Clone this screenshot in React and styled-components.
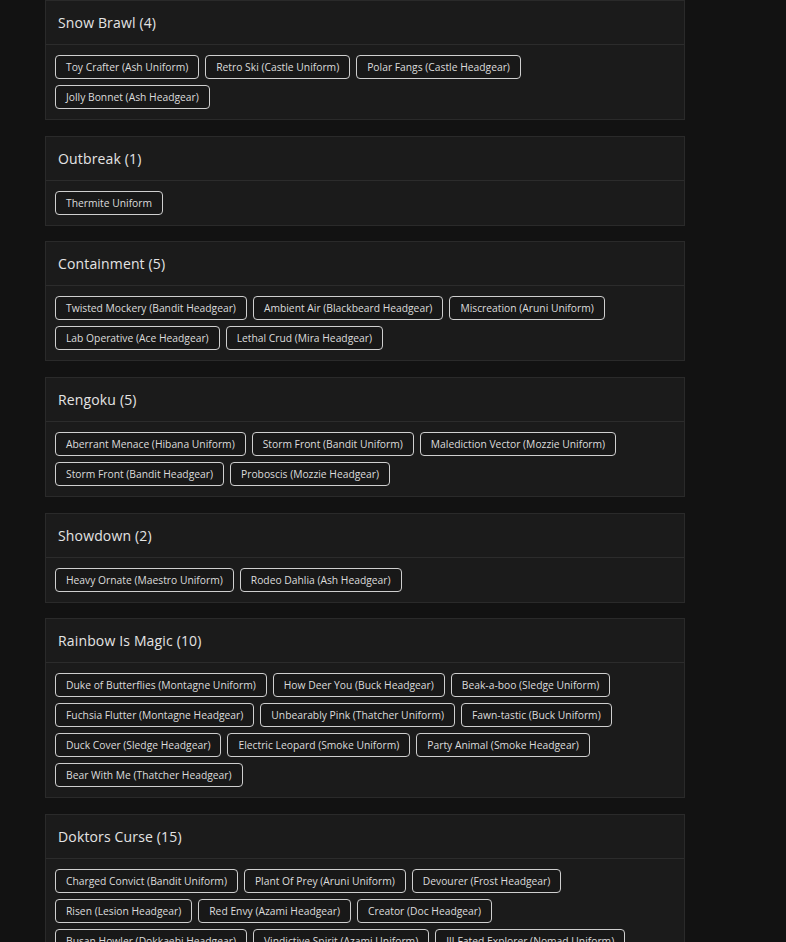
import React from "react";
import styled, { createGlobalStyle } from "styled-components";

const Global = createGlobalStyle`
  html, body { margin: 0; padding: 0; background: #121212; }
  body { font-family: "Open Sans", "Liberation Sans", sans-serif; color: #e0e0e0; }
  ::-webkit-scrollbar { width: 0; height: 0; }
`;

const Page = styled.div`
  padding: 0 0 40px 45px;
  display: flex;
  flex-direction: column;
  gap: 15.7px;
  width: 640px;
`;

const Card = styled.section`
  background: #1b1b1b;
  border: 1px solid #2a2a2a;
  display: flex;
  flex-direction: column;
`;

const Header = styled.div`
  height: 43px;
  padding: 0 12px;
  display: flex;
  align-items: center;
  border-bottom: 1px solid #2c2c2c;
`;

const Title = styled.h3`
  margin: 0;
  font-size: 14px;
  font-weight: 500;
  color: #e4e4e4;
  letter-spacing: 0.15px;
`;

const Body = styled.div`
  padding: 10px 9px;
  display: flex;
  flex-wrap: wrap;
  gap: 6px;
`;

const Chip = styled.span`
  display: inline-flex;
  align-items: center;
  height: 24px;
  box-sizing: border-box;
  padding: 0 10px;
  border: 1px solid #cfcfcf;
  border-radius: 4px;
  background: #181818;
  font-size: 10.3px;
  color: #dcdcdc;
  white-space: nowrap;
`;

const data = [
  ["Snow Brawl", ["Toy Crafter (Ash Uniform)", "Retro Ski (Castle Uniform)", "Polar Fangs (Castle Headgear)", "Jolly Bonnet (Ash Headgear)"]],
  ["Outbreak", ["Thermite Uniform"]],
  ["Containment", ["Twisted Mockery (Bandit Headgear)", "Ambient Air (Blackbeard Headgear)", "Miscreation (Aruni Uniform)", "Lab Operative (Ace Headgear)", "Lethal Crud (Mira Headgear)"]],
  ["Rengoku", ["Aberrant Menace (Hibana Uniform)", "Storm Front (Bandit Uniform)", "Malediction Vector (Mozzie Uniform)", "Storm Front (Bandit Headgear)", "Proboscis (Mozzie Headgear)"]],
  ["Showdown", ["Heavy Ornate (Maestro Uniform)", "Rodeo Dahlia (Ash Headgear)"]],
  ["Rainbow Is Magic", ["Duke of Butterflies (Montagne Uniform)", "How Deer You (Buck Headgear)", "Beak-a-boo (Sledge Uniform)", "Fuchsia Flutter (Montagne Headgear)", "Unbearably Pink (Thatcher Uniform)", "Fawn-tastic (Buck Uniform)", "Duck Cover (Sledge Headgear)", "Electric Leopard (Smoke Uniform)", "Party Animal (Smoke Headgear)", "Bear With Me (Thatcher Headgear)"]],
  ["Doktors Curse", ["Charged Convict (Bandit Uniform)", "Plant Of Prey (Aruni Uniform)", "Devourer (Frost Headgear)", "Risen (Lesion Headgear)", "Red Envy (Azami Headgear)", "Creator (Doc Headgear)", "Busan Howler (Dokkaebi Headgear)", "Vindictive Spirit (Azami Uniform)", "Ill-Fated Explorer (Nomad Uniform)", "Dark Horror (Kaid Uniform)", "Grim Reaper (Lion Headgear)", "Night Terror (Vigil Uniform)", "Pest Control (Smoke Headgear)", "Phantom Fiend (Ela Uniform)", "Grave Keeper (Jäger Headgear)"]],
];

export default function App() {
  return (
    <>
      <Global />
      <Page>
        {data.map(([name, items]) => (
          <Card key={name}>
            <Header>
              <Title>{name} ({items.length})</Title>
            </Header>
            <Body>
              {items.map((it, i) => (
                <Chip key={i}>{it}</Chip>
              ))}
            </Body>
          </Card>
        ))}
      </Page>
    </>
  );
}
